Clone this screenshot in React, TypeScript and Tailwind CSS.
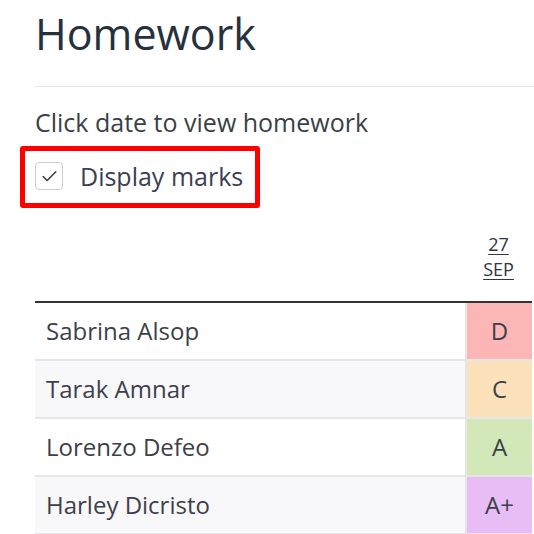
import { Check } from "lucide-react";

const rows = [
  { name: "Sabrina Alsop", mark: "D", tone: "bg-[#fdb6b6]" },
  { name: "Tarak Amnar", mark: "C", tone: "bg-[#fce2ba]" },
  { name: "Lorenzo Defeo", mark: "A", tone: "bg-[#d3e8b9]" },
  { name: "Harley Dicristo", mark: "A+", tone: "bg-[#e8bdf5]" },
];

export default function App() {
  return (
    <div className="min-h-[534px] bg-white pl-[35px] font-['Open_Sans',sans-serif] text-[#3a3f48]">
      <h1 className="mt-[8px] text-[43px] leading-[52px] font-normal text-[#27313d]">Homework</h1>
      <hr className="mt-[26px] border-0 border-t border-[#e3e8ee]" />

      <p className="mt-[18px] text-[25px] leading-[34px]">Click date to view homework</p>

      <label className="mt-[7px] ml-[-15px] inline-flex h-[62px] items-center gap-[17px] rounded-[3px] border-[5px] border-[#ff0000] pr-[12px] pl-[10px] pb-[2px]">
        <span className="flex h-[28px] w-[28px] items-center justify-center rounded-[4px] border border-[#cfcfcf] bg-white">
          <Check className="h-[19px] w-[19px] text-[#3f3f3f]" strokeWidth={2} />
        </span>
        <span className="text-[25px] leading-[34px] text-[#3a3f52]">Display marks</span>
      </label>

      <table className="mt-[23px] w-[497px] border-separate border-spacing-0">
        <thead>
          <tr>
            <th className="h-[72px] border-b-2 border-[#333]"></th>
            <th className="w-[67px] border-b-2 border-[#333] pb-[19px] align-bottom text-[18px] leading-[25px] font-normal text-[#2f3440]">
              <a className="underline underline-offset-[3px]">27</a>
              <br />
              <a className="underline underline-offset-[3px]">SEP</a>
            </th>
          </tr>
        </thead>
        <tbody>
          {rows.map((r, i) => (
            <tr key={r.name} className={i % 2 ? "bg-[#f8f8fa]" : "bg-white"}>
              <td className="h-[58px] border-b-2 border-[#e6e6e6] pl-[11px] text-[24px] text-[#3d3f4a]">{r.name}</td>
              <td className={`border-b-2 border-l-2 border-[#e6e6e6] text-center text-[24px] text-[#3d3f4a] ${r.tone}`}>
                {r.mark}
              </td>
            </tr>
          ))}
        </tbody>
      </table>
    </div>
  );
}
